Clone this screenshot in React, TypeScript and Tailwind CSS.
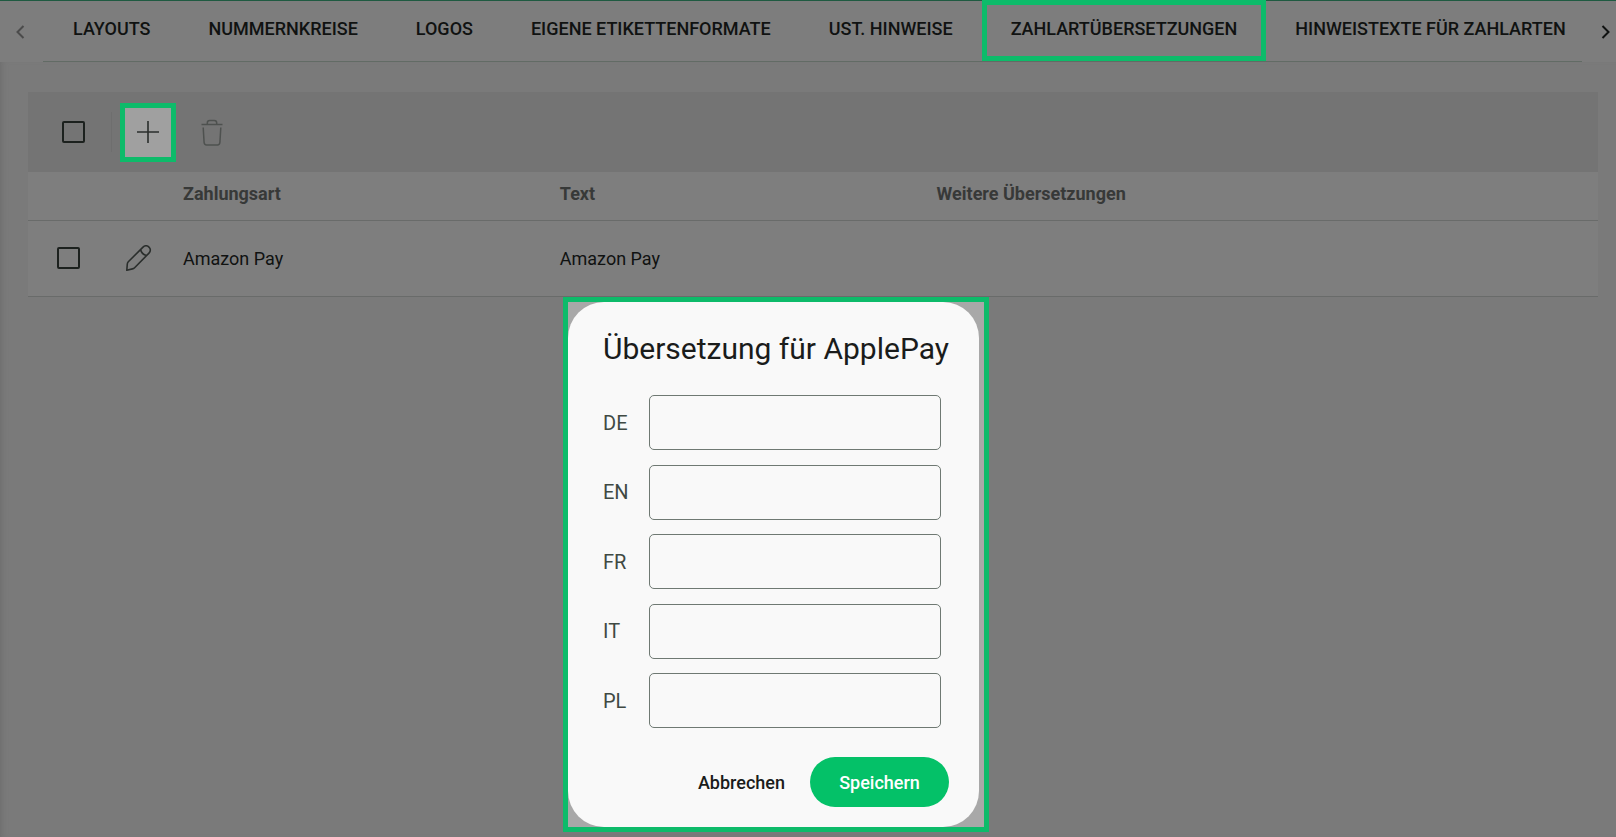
import React, {useState} from "react";
import clsx from "clsx";

const tabs = [
  "LAYOUTS",
  "NUMMERNKREISE",
  "LOGOS",
  "EIGENE ETIKETTENFORMATE",
  "UST. HINWEISE",
  "ZAHLARTÜBERSETZUNGEN",
  "HINWEISTEXTE FÜR ZAHLARTEN",
];

const languages = ["DE", "EN", "FR", "IT", "PL"];

const rows = [{id: 1, name: "Amazon Pay", text: "Amazon Pay", more: ""}];

const checkboxClass =
  "block h-[22px] w-[23px] appearance-none rounded-[2px] border-2 border-[#1c211e] checked:bg-[#1c211e]";

const ChevronIcon: React.FC<{right?: boolean}> = ({right}) => (
  <svg width="9" height="14" viewBox="0 0 9 14" fill="none">
    <path
      d={right ? "M1.5 1 7.5 7l-6 6" : "M7.5 1l-6 6 6 6"}
      stroke="currentColor"
      strokeWidth="2"
    />
  </svg>
);

const PlusIcon = () => (
  <svg width="22" height="22" viewBox="0 0 22 22" fill="none">
    <path d="M11 0v22M0 11h22" stroke="currentColor" strokeWidth="1.6" />
  </svg>
);

const TrashIcon = () => (
  <svg width="22" height="27" viewBox="0 0 22 27" fill="none">
    <path
      d="M.5 5.5h21M6.3 5.2V3.9c0-1.500.9-2.500 2.400-2.500h4.600c1.500 0 2.400 1 2.400 2.500v1.300M2.200 8.500l.9 15c.1 1.500 1 2.400 2.400 2.400h11c1.400 0 2.300-.9 2.400-2.400l.9-15"
      stroke="currentColor"
      strokeWidth="1.5"
    />
  </svg>
);

const PencilIcon = () => (
  <svg width="26" height="26" viewBox="0 0 26 26" fill="none">
    <path
      d="M.8 25.200l.5-6.200c.1-.9.4-1.600 1-2.200L17 2.100c1.800-1.800 4.300-1.800 6 0 1.800 1.700 1.800 4.200 0 6L8.600 22.700c-.6.600-1.300 1-2.200 1.200L.8 25.200zM14.600 4.500c.6 2.800 3.200 5.400 6 6"
      stroke="currentColor"
      strokeWidth="1.6"
      strokeLinejoin="round"
    />
  </svg>
);

const TranslationDialog: React.FC = () => {
  const [values, setValues] = useState<Record<string, string>>({});

  const handleSubmit = (e: React.FormEvent) => {
    e.preventDefault();
  };

  return (
    <div className="fixed inset-0 flex items-end justify-center pr-16 pb-[5px]">
      <div className="border-5 border-[#0dbb6a] bg-[#a8a8a8] pr-[5px]">
        <form
          role="dialog"
          aria-labelledby="dialog-title"
          onSubmit={handleSubmit}
          className="w-[411px] rounded-[36px] bg-[#f9f9f9] pt-[27px] pr-[30px] pb-5 pl-[35px]"
        >
          <h2
            id="dialog-title"
            className="text-[30px] leading-10 whitespace-nowrap text-[#1a1c1b]"
          >
            Übersetzung für ApplePay
          </h2>
          <div className="mt-[26px] flex h-[333px] flex-col justify-between pr-2">
            {languages.map((lang) => (
              <div key={lang} className="flex items-center justify-between">
                <label
                  htmlFor={`lang-${lang}`}
                  className="text-xl text-[#3f4943]"
                >
                  {lang}
                </label>
                <input
                  id={`lang-${lang}`}
                  type="text"
                  value={values[lang] ?? ""}
                  onChange={(e) =>
                    setValues((prev) => ({...prev, [lang]: e.target.value}))
                  }
                  className="h-[55px] w-[292px] rounded-[5px] border border-[#6f7973] px-4 text-lg"
                />
              </div>
            ))}
          </div>
          <div className="mt-[29px] flex justify-end text-[18px] font-medium">
            <button type="button" className="px-[25px] text-[#1a1c1b]">
              Abbrechen
            </button>
            <button
              type="submit"
              className="h-[50px] w-[139px] rounded-full bg-[#04c168] text-white"
            >
              Speichern
            </button>
          </div>
        </form>
      </div>
    </div>
  );
};

const App: React.FC = () => {
  const [activeTab, setActiveTab] = useState("ZAHLARTÜBERSETZUNGEN");

  return (
    <div className="min-h-screen overflow-x-hidden bg-[#7a7a7a] font-[Roboto,sans-serif] text-[#101211]">
      <header className="flex h-[62px] border-t border-[#1f5a41] bg-[#7d7d7d]">
        <button
          aria-label="Zurück"
          className="flex w-[43px] shrink-0 items-center pl-4 text-[#4b4b4b]"
        >
          <ChevronIcon />
        </button>
        <nav className="-mt-px flex min-w-0 flex-1 overflow-hidden border-b border-[#626b65] pl-px">
          {tabs.map((tab) => (
            <button
              key={tab}
              onClick={() => setActiveTab(tab)}
              className={clsx(
                "shrink-0 border-5 px-6 pb-1 text-[18px] font-medium whitespace-nowrap",
                tab === activeTab ? "border-[#0dbb6a]" : "border-transparent",
              )}
            >
              {tab}
            </button>
          ))}
        </nav>
        <button
          aria-label="Weiter"
          className="flex w-[34px] shrink-0 items-center pl-[19px]"
        >
          <ChevronIcon right />
        </button>
      </header>

      <main className="min-h-[775px] pt-[30px] pr-[18px] pl-7 shadow-[inset_6px_0_6px_-5px_#6c6c6c]">
        <div className="flex h-20 items-center bg-[#747474] pl-[34px]">
          <input
            type="checkbox"
            aria-label="Alle auswählen"
            className={checkboxClass}
          />
          <div className="ml-[26px] h-10 w-px bg-[#6e6e6e]" />
          <button
            aria-label="Hinzufügen"
            className="ml-2 flex h-[59px] w-14 items-center justify-center border-5 border-[#0dbb6a] bg-[#a0a0a0] text-[#2a2e2c]"
          >
            <PlusIcon />
          </button>
          <button aria-label="Löschen" className="ml-[25px] text-[#4e514f]">
            <TrashIcon />
          </button>
        </div>

        <table className="w-full table-fixed bg-[#7e7e7e] text-left text-[18px]">
          <colgroup>
            <col className="w-[98px]" />
            <col className="w-[57px]" />
            <col className="w-[24%]" />
            <col className="w-[24%]" />
            <col />
          </colgroup>
          <thead>
            <tr className="h-12 border-b border-[#696b6a] text-[#373938]">
              <td />
              <td />
              <th className="pb-1 font-bold">Zahlungsart</th>
              <th className="pb-1 font-bold">Text</th>
              <th className="pb-1 font-bold">Weitere Übersetzungen</th>
            </tr>
          </thead>
          <tbody>
            {rows.map((row) => (
              <tr key={row.id} className="h-[76px] border-b border-[#696b6a]">
                <td className="pl-[29px]">
                  <input
                    type="checkbox"
                    aria-label={row.name}
                    className={checkboxClass}
                  />
                </td>
                <td>
                  <button
                    aria-label="Bearbeiten"
                    className="block text-[#2a2e2c]"
                  >
                    <PencilIcon />
                  </button>
                </td>
                <td>{row.name}</td>
                <td>{row.text}</td>
                <td>{row.more}</td>
              </tr>
            ))}
          </tbody>
        </table>
      </main>

      <TranslationDialog />
    </div>
  );
};

export default App;
